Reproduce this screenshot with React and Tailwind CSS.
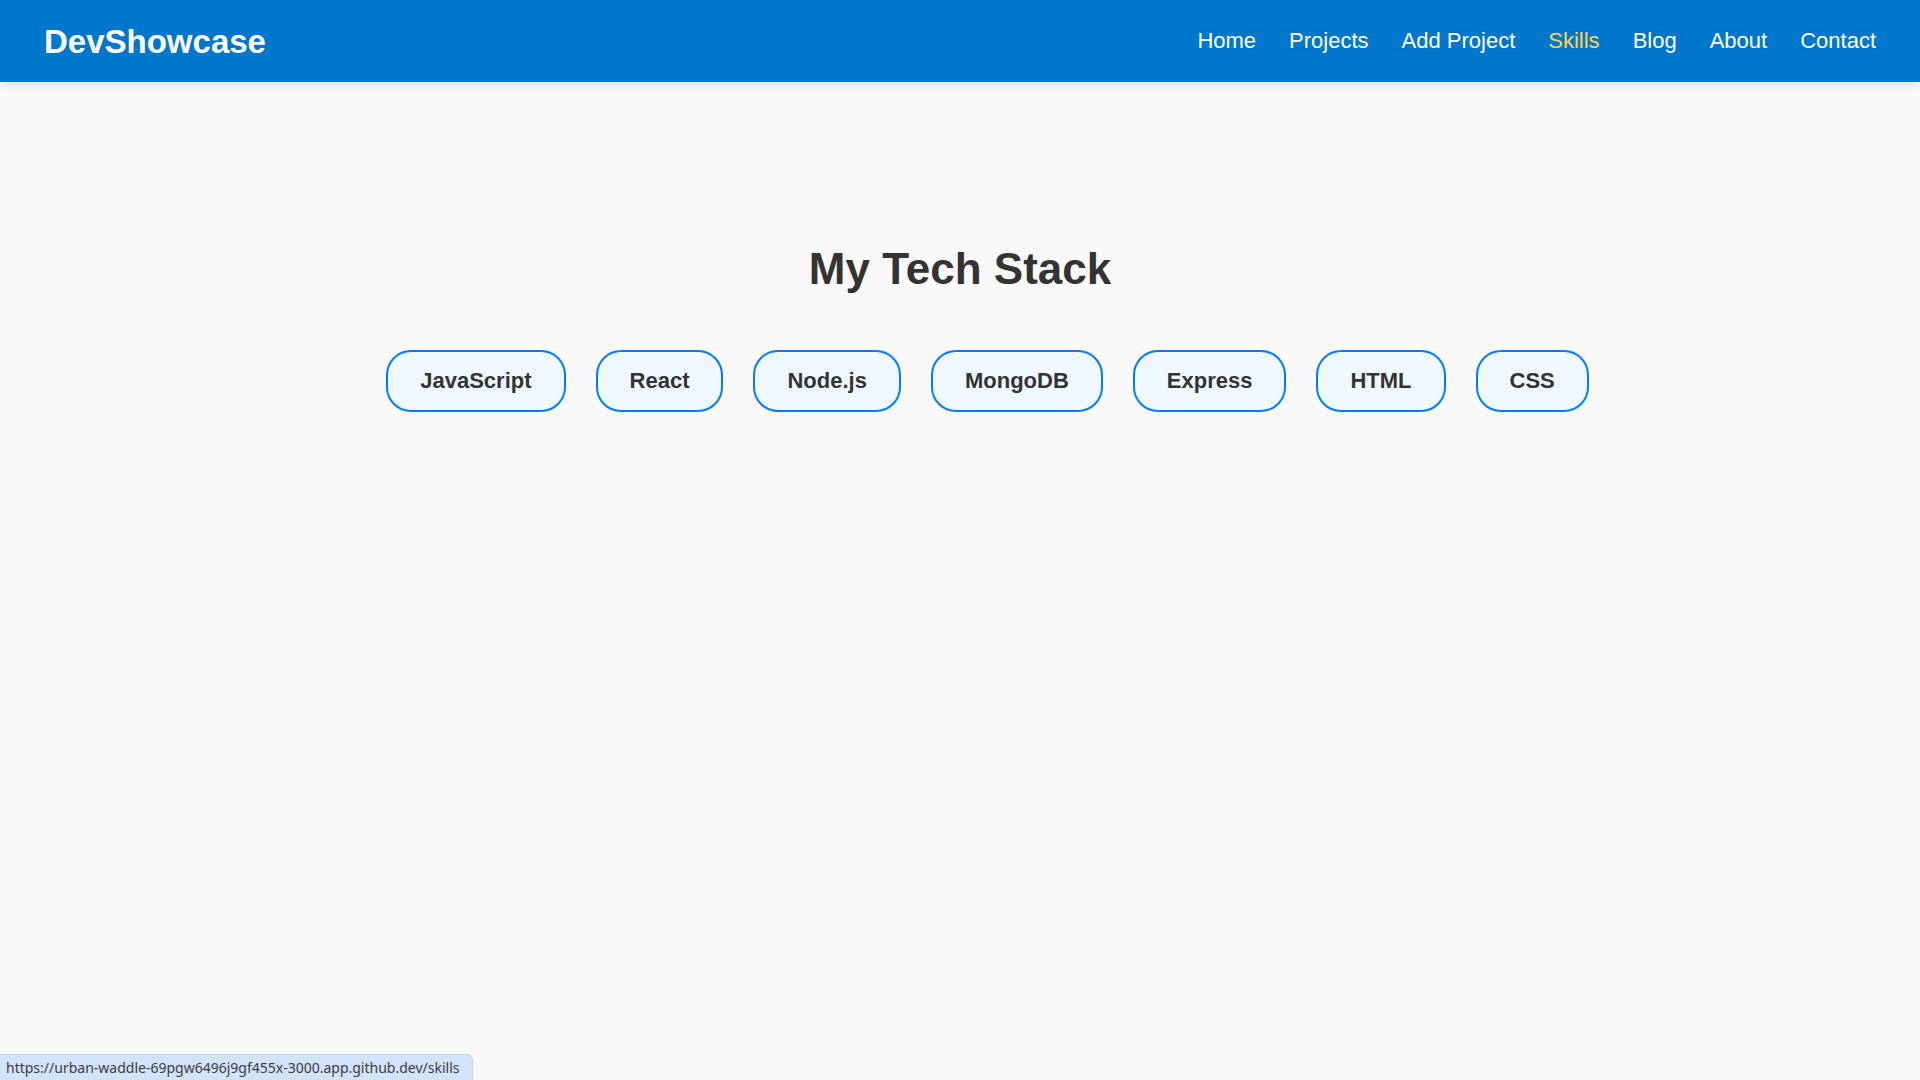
import React from "react";

const links = ["Home", "Projects", "Add Project", "Skills", "Blog", "About", "Contact"];
const skills = ["JavaScript", "React", "Node.js", "MongoDB", "Express", "HTML", "CSS"];

function Navbar() {
  return (
    <nav className="h-[82px] bg-[#0077cc] flex items-center justify-between px-[44px] shadow-[0_2px_10px_rgba(0,0,0,0.12)] relative z-10">
      <h1 className="text-white font-bold text-[33px] leading-none">DevShowcase</h1>
      <ul className="flex items-center gap-[33px] pt-[2px]">
        {links.map((l) => (
          <li key={l}>
            <a href="#" className={`text-[22px] leading-none ${l === "Skills" ? "text-[#ffd54f]" : "text-white"}`}>
              {l}
            </a>
          </li>
        ))}
      </ul>
    </nav>
  );
}

export default function App() {
  return (
    <div className="min-h-screen bg-[#f9f9f9] text-[#333]" style={{ fontFamily: '"Liberation Sans", Arial, sans-serif' }}>
      <Navbar />

      <section className="pt-[166px] flex flex-col items-center">
        <h2 className="font-bold text-[44px] leading-[42px] text-[#333]">My Tech Stack</h2>
        <div className="mt-[60px] flex justify-center gap-[30px] pl-[55px]">
          {skills.map((s) => (
            <span
              key={s}
              className="border-2 border-[#007bff] bg-[#f0f8ff] rounded-[25px] px-[32px] py-[16px] text-[22px] leading-[26px] font-bold text-[#333]"
            >
              {s}
            </span>
          ))}
        </div>
      </section>

      <div
        className="fixed bottom-0 left-0 h-[26px] w-[473px] bg-[#d3e3fd] border-t border-r border-[#c4d3ea] rounded-tr-[6px] flex items-center pl-[6px] text-[14px] text-[#3c3c3c]"
        style={{ fontFamily: '"Noto Sans", "Open Sans", sans-serif' }}
      >
        https://urban-waddle-69pgw6496j9gf455x-3000.app.github.dev/skills
      </div>
    </div>
  );
}
